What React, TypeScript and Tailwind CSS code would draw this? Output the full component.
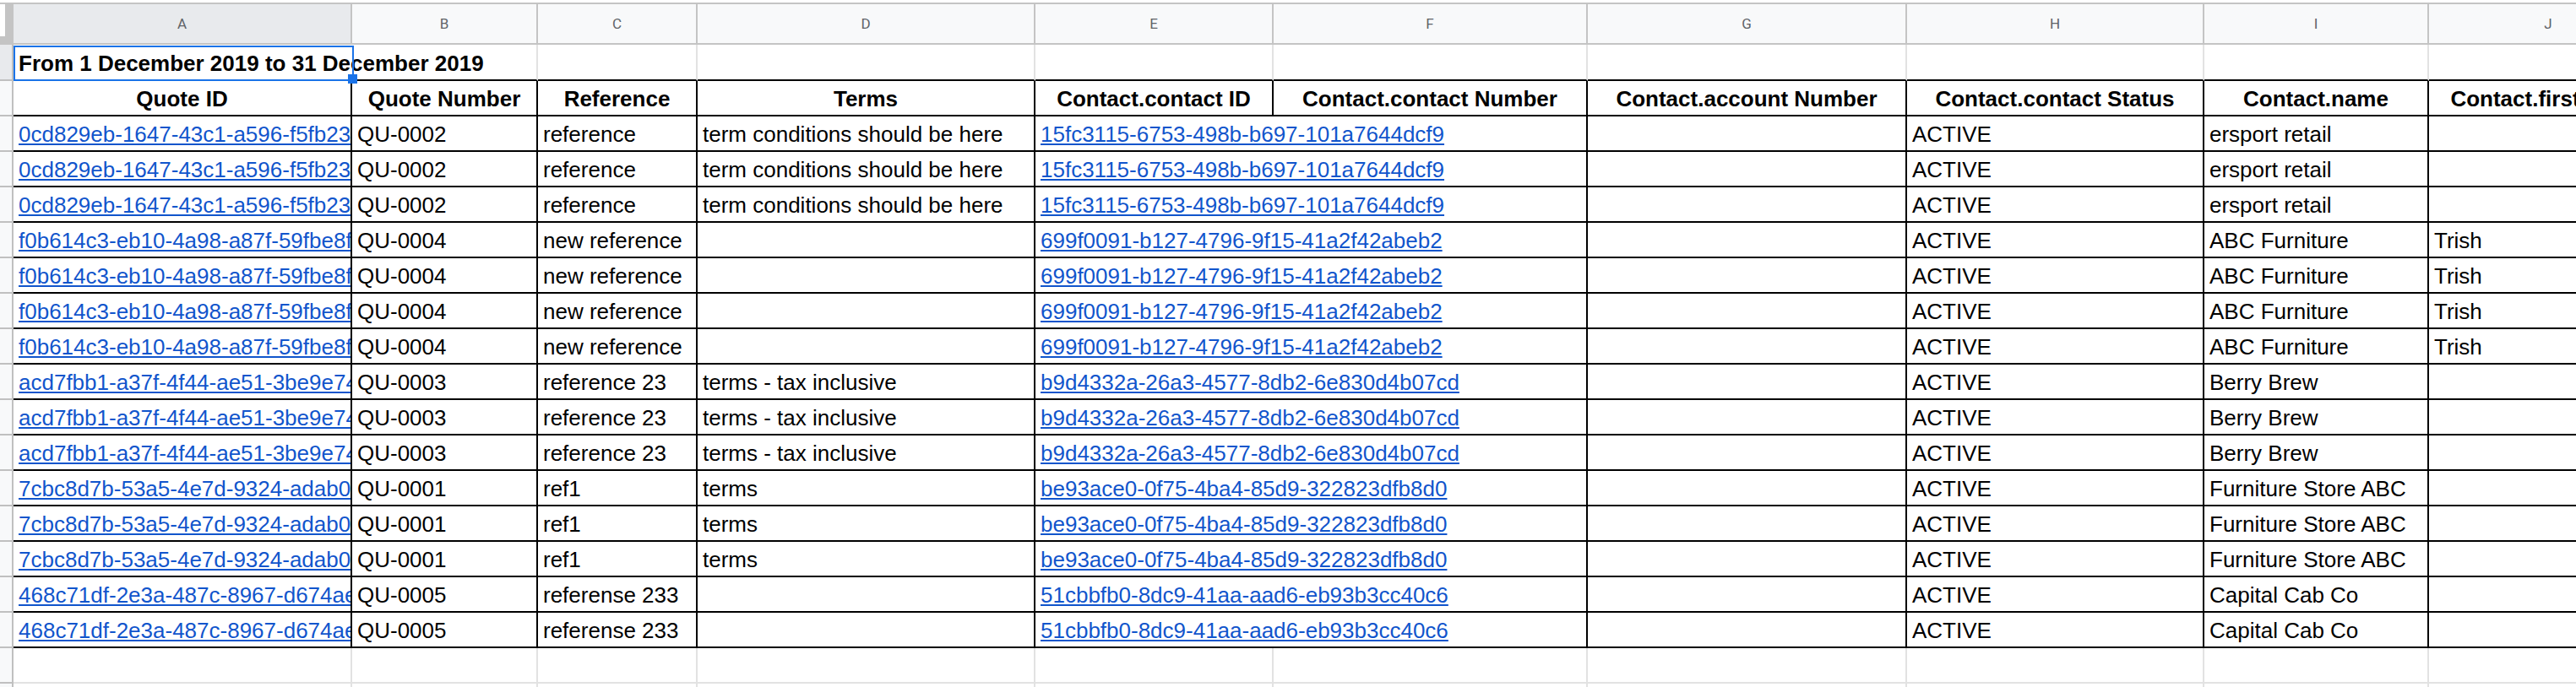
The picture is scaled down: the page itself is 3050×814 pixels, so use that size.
import React from "react";

const GRID =
  "grid grid-cols-[16px_401px_220px_189px_400px_282px_372px_378px_352px_266px_284px]";
const FONT = "font-['Liberation_Sans',Arial,sans-serif]";
const BLACK = "border-black";
const LIGHT = "border-[#e2e2e2]";

const letters = ["A", "B", "C", "D", "E", "F", "G", "H", "I", "J"];
const headers = [
  "Quote ID",
  "Quote Number",
  "Reference",
  "Terms",
  "Contact.contact ID",
  "Contact.contact Number",
  "Contact.account Number",
  "Contact.contact Status",
  "Contact.name",
  "Contact.first Name",
];

type Row = [string, string, string, string, string, string, string, string];

const rows: Row[] = [
  ["0cd829eb-1647-43c1-a596-f5fb23a8c4e1", "QU-0002", "reference", "term conditions should be here", "15fc3115-6753-498b-b697-101a7644dcf9", "ACTIVE", "ersport retail", ""],
  ["0cd829eb-1647-43c1-a596-f5fb23a8c4e1", "QU-0002", "reference", "term conditions should be here", "15fc3115-6753-498b-b697-101a7644dcf9", "ACTIVE", "ersport retail", ""],
  ["0cd829eb-1647-43c1-a596-f5fb23a8c4e1", "QU-0002", "reference", "term conditions should be here", "15fc3115-6753-498b-b697-101a7644dcf9", "ACTIVE", "ersport retail", ""],
  ["f0b614c3-eb10-4a98-a87f-59fbe8f1c2d3", "QU-0004", "new reference", "", "699f0091-b127-4796-9f15-41a2f42abeb2", "ACTIVE", "ABC Furniture", "Trish"],
  ["f0b614c3-eb10-4a98-a87f-59fbe8f1c2d3", "QU-0004", "new reference", "", "699f0091-b127-4796-9f15-41a2f42abeb2", "ACTIVE", "ABC Furniture", "Trish"],
  ["f0b614c3-eb10-4a98-a87f-59fbe8f1c2d3", "QU-0004", "new reference", "", "699f0091-b127-4796-9f15-41a2f42abeb2", "ACTIVE", "ABC Furniture", "Trish"],
  ["f0b614c3-eb10-4a98-a87f-59fbe8f1c2d3", "QU-0004", "new reference", "", "699f0091-b127-4796-9f15-41a2f42abeb2", "ACTIVE", "ABC Furniture", "Trish"],
  ["acd7fbb1-a37f-4f44-ae51-3be9e74d0a12", "QU-0003", "reference 23", "terms - tax inclusive", "b9d4332a-26a3-4577-8db2-6e830d4b07cd", "ACTIVE", "Berry Brew", ""],
  ["acd7fbb1-a37f-4f44-ae51-3be9e74d0a12", "QU-0003", "reference 23", "terms - tax inclusive", "b9d4332a-26a3-4577-8db2-6e830d4b07cd", "ACTIVE", "Berry Brew", ""],
  ["acd7fbb1-a37f-4f44-ae51-3be9e74d0a12", "QU-0003", "reference 23", "terms - tax inclusive", "b9d4332a-26a3-4577-8db2-6e830d4b07cd", "ACTIVE", "Berry Brew", ""],
  ["7cbc8d7b-53a5-4e7d-9324-adab0e5f6a7b", "QU-0001", "ref1", "terms", "be93ace0-0f75-4ba4-85d9-322823dfb8d0", "ACTIVE", "Furniture Store ABC", ""],
  ["7cbc8d7b-53a5-4e7d-9324-adab0e5f6a7b", "QU-0001", "ref1", "terms", "be93ace0-0f75-4ba4-85d9-322823dfb8d0", "ACTIVE", "Furniture Store ABC", ""],
  ["7cbc8d7b-53a5-4e7d-9324-adab0e5f6a7b", "QU-0001", "ref1", "terms", "be93ace0-0f75-4ba4-85d9-322823dfb8d0", "ACTIVE", "Furniture Store ABC", ""],
  ["468c71df-2e3a-487c-8967-d674ae1b2c3d", "QU-0005", "referense 233", "", "51cbbfb0-8dc9-41aa-aad6-eb93b3cc40c6", "ACTIVE", "Capital Cab Co", ""],
  ["468c71df-2e3a-487c-8967-d674ae1b2c3d", "QU-0005", "referense 233", "", "51cbbfb0-8dc9-41aa-aad6-eb93b3cc40c6", "ACTIVE", "Capital Cab Co", ""],
];

const CELL =
  "flex items-end pb-[4px] px-[6px] text-[26px] leading-[30px] whitespace-nowrap overflow-hidden border-r-2 border-b-2 text-black";

function RowHead({ selected = false }: { selected?: boolean }) {
  return (
    <div
      className={`border-r-2 border-b-2 border-[#c0c0c0] ${
        selected ? "bg-[#e8eaed]" : "bg-[#f8f9fa]"
      }`}
    />
  );
}

function Link({ text }: { text: string }) {
  return <span className="text-[#1155cc] underline">{text}</span>;
}

export default function App() {
  return (
    <div className={`w-[3050px] h-[814px] overflow-hidden bg-white ${FONT}`}>
      <div className="w-[3160px]">
        {/* Column letters */}
        <div className="h-[53px] pt-[3px] bg-white">
          <div className={`${GRID} h-[50px]`}>
            <div className="bg-[#c4c4c4] pt-[2px]">
              <div className="w-[6px] h-[38px] bg-white" />
            </div>
            {letters.map((l, i) => (
              <div
                key={l}
                className={`flex items-center justify-center pt-[2px] border-t-2 border-b-2 border-r-2 border-[#c4c4c4] font-['Roboto',sans-serif] text-[17px] text-[#5f6368] ${
                  i === 0 ? "bg-[#e8eaed]" : "bg-[#f8f9fa]"
                }`}
              >
                {l}
              </div>
            ))}
          </div>
        </div>

        {/* Row 1: title */}
        <div className={`${GRID} h-[43px]`}>
          <RowHead selected />
          <div
            className={`relative z-10 flex items-end pb-[4px] px-[6px] text-[26px] leading-[30px] whitespace-nowrap font-bold text-black border-b-2 ${BLACK}`}
          >
            <span>From 1 December 2019 to 31 December 2019</span>
            <div className="pointer-events-none absolute left-0 top-[1px] -right-[2px] -bottom-[2px] border-2 border-[#1a73e8]" />
            <div className="absolute -right-[6px] -bottom-[5px] w-[11px] h-[11px] bg-[#1a73e8]" />
          </div>
          {letters.slice(1).map((l) => (
            <div key={l} className={`border-r-2 border-b-2 ${LIGHT} !border-b-black`} />
          ))}
        </div>

        {/* Row 2: headers */}
        <div className={`${GRID} h-[42px]`}>
          <RowHead />
          {headers.map((h) => (
            <div
              key={h}
              className={`${CELL} ${BLACK} justify-center font-bold`}
            >
              {h}
            </div>
          ))}
        </div>

        {/* Data rows */}
        {rows.map((r, idx) => (
          <div key={idx} className={`${GRID} h-[42px]`}>
            <RowHead />
            <div className={`${CELL} ${BLACK}`}>
              <Link text={r[0]} />
            </div>
            <div className={`${CELL} ${BLACK}`}>{r[1]}</div>
            <div className={`${CELL} ${BLACK}`}>{r[2]}</div>
            <div className={`${CELL} ${BLACK}`}>{r[3]}</div>
            <div className={`${CELL} ${BLACK} col-span-2`}>
              <Link text={r[4]} />
            </div>
            <div className={`${CELL} ${BLACK}`}></div>
            <div className={`${CELL} ${BLACK}`}>{r[5]}</div>
            <div className={`${CELL} ${BLACK}`}>{r[6]}</div>
            <div className={`${CELL} ${BLACK}`}>{r[7]}</div>
          </div>
        ))}

        {/* Empty rows */}
        {[0, 1].map((k) => (
          <div key={k} className={`${GRID} h-[42px]`}>
            <RowHead />
            {letters.map((l) => (
              <div key={l} className={`border-r-2 border-b-2 ${LIGHT}`} />
            ))}
          </div>
        ))}
      </div>
    </div>
  );
}
